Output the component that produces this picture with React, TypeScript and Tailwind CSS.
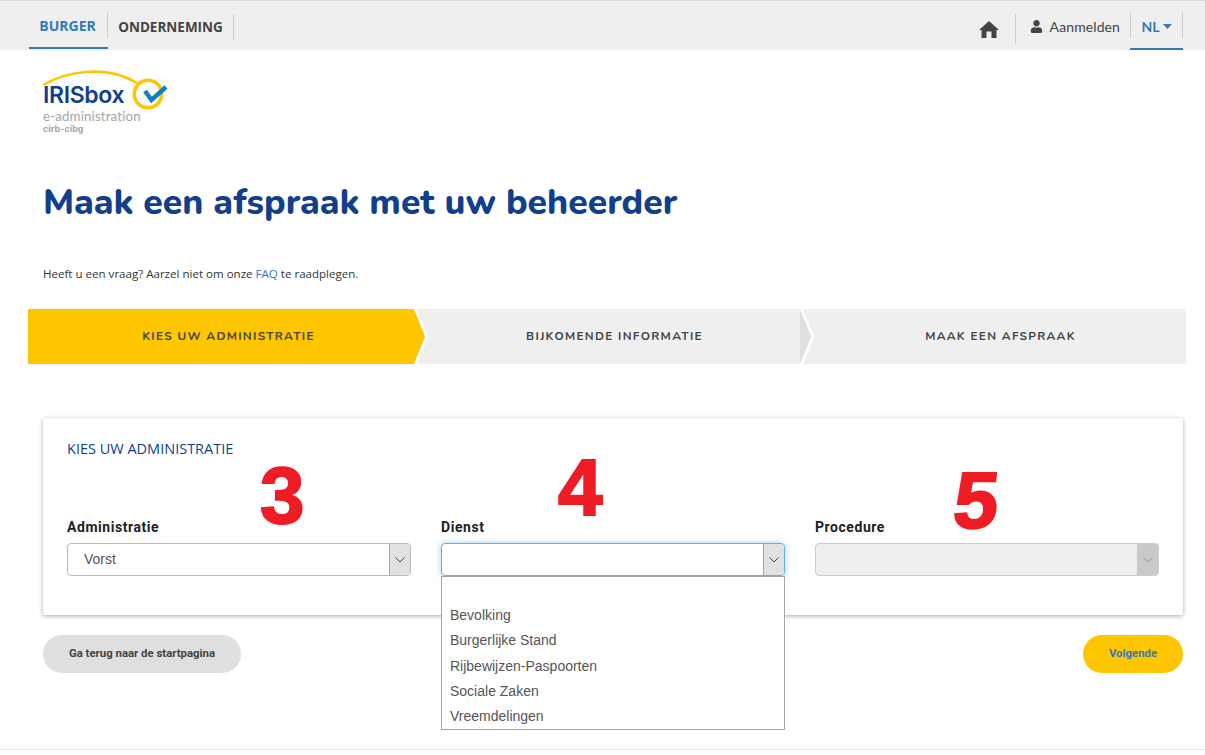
import React from "react";
import { FaUser } from "react-icons/fa";

const nun = "font-['Nunito','Noto_Sans','Open_Sans',sans-serif]";

function Logo() {
  return (
    <div className="relative w-[130px] h-[68px]">
      <svg className="absolute left-0 top-0" width="130" height="50" viewBox="0 0 130 50" fill="none">
        <path d="M0.5 16 C 20 4, 62 -6, 94 14" stroke="#fec600" strokeWidth="2.6" />
        <circle cx="105" cy="25" r="13.7" stroke="#fec600" strokeWidth="3.6" fill="#fff" />
        <path d="M102 22 L108.5 31 L123 18" stroke="#0f7fc0" strokeWidth="4.5" fill="none" />
      </svg>
      <div className="absolute left-0 top-[12px] text-[23px] leading-[28px] font-semibold tracking-[-0.35px] text-[#123f8c] font-['Inter',sans-serif]">IRISbox</div>
      <div className="absolute left-0 top-[39px] text-[13.4px] leading-[16px] tracking-[0.1px] text-[#a6a6a6] font-['Lato',sans-serif]">e-administration</div>
      <div className="absolute left-0 top-[54px] text-[9px] leading-[12px] font-bold text-[#a8a8a8] font-['Inter',sans-serif]">cirb-cibg</div>
    </div>
  );
}

function Chevron({ fill }: { fill: string }) {
  return (
    <svg className="absolute left-full top-0 z-10" width="15" height="55" viewBox="0 0 15 55">
      <polygon points="0,0 11,27.5 0,55" fill={fill} />
      <polyline points="1,-1 13,27.5 1,56" fill="none" stroke="#fff" strokeWidth="2.5" />
    </svg>
  );
}

function Step({ label, active, tip }: { label: string; active?: boolean; tip: string }) {
  return (
    <div className={`relative flex-1 flex items-center justify-center pl-[15px] ${active ? "bg-[#fec600]" : "bg-[#efefef]"}`}>
      <span className={`${nun} text-[11.8px] font-bold tracking-[1.3px] text-[#444]`}>{label}</span>
      {tip && <Chevron fill={tip} />}
    </div>
  );
}

function Field({ label, value, state, children }: { label: string; value?: string; state?: "focus" | "disabled"; children?: React.ReactNode }) {
  const box =
    state === "focus"
      ? "border-[#66afe9] shadow-[0_0_6px_rgba(102,175,233,0.6)] bg-white"
      : state === "disabled"
        ? "border-[#ccc] bg-[#eee]"
        : "border-[#bbb] bg-white";
  const btn = state === "disabled" ? "bg-[#c9c9c9] border-[#c9c9c9]" : "bg-[#e1e1e1] border-[#a6a6a6]";
  return (
    <div className="relative flex flex-col">
      <label className="font-['Roboto',sans-serif] text-[14px] leading-[16px] font-bold tracking-[0.55px] text-[#222] mb-[8px]">{label}</label>
      <div className={`h-[33px] rounded-[4px] border flex items-stretch overflow-hidden ${box}`}>
        <div className="flex-1 pl-[16px] flex items-center font-['Liberation_Sans',sans-serif] text-[14px] text-[#555]">{value}</div>
        <div className={`w-[21px] border-l flex items-center justify-center ${btn}`}>
          <svg width="10" height="6" viewBox="0 0 10 6" fill="none">
            <path d="M0.5 0.5 L5 5 L9.5 0.5" stroke={state === "disabled" ? "#999" : "#444"} strokeWidth="1" />
          </svg>
        </div>
      </div>
      {children}
    </div>
  );
}

function Num({ children, className }: { children: string; className: string }) {
  return (
    <div className={`absolute font-['Liberation_Sans',sans-serif] font-bold text-[80px] leading-[82px] text-[#ee1c25] [-webkit-text-stroke:2px_#ee1c25] ${className}`}>{children}</div>
  );
}

export default function App() {
  return (
    <div className="w-[1205px] h-[755px] overflow-hidden bg-white relative">
      <header className="h-[50px] bg-[#efefef] border-t border-[#dcdcdc] flex justify-between font-['Lato',sans-serif] pl-[29px] pr-[22px]">
        <div className="flex">
          <div className="w-[79px] flex items-center border-b-[2px] border-[#337ab7] mb-[1px]">
            <div className="h-[26px] mt-[2px] w-full border-r border-[#ccc] flex items-center justify-center pr-[1px] pt-[1px] text-[14px] font-bold text-[#337ab7] font-['Open_Sans',sans-serif]">BURGER</div>
          </div>
          <div className="w-[126px] flex items-center mb-[1px]">
            <div className="h-[26px] mt-[4px] w-full border-r border-[#ccc] flex items-center justify-center text-[13.5px] font-bold text-[#444] font-['Open_Sans',sans-serif]">ONDERNEMING</div>
          </div>
        </div>
        <div className="flex items-center">
          <svg className="mr-[16px] mt-[7px]" width="20" height="17" viewBox="0 0 20 17">
            <path d="M10 0 L20 9 L17.5 9 L17.5 17 L12.5 17 L12.5 10.5 L7.5 10.5 L7.5 17 L2.5 17 L2.5 9 L0 9 Z" fill="#444" />
          </svg>
          <div className="h-[30px] mt-[6px] border-l border-[#ccc] mr-[14px]" />
          <FaUser className="text-[#444] mr-[7px] mt-[1px]" size={13} />
          <span className="text-[14px] tracking-[0.1px] text-[#444] mr-[10px] mt-[2px]">Aanmelden</span>
          <div className="h-full flex items-center w-[53px] border-b-[2px] border-[#337ab7] mb-[1px]">
            <div className="h-[26px] mt-[2px] w-full border-x border-[#ccc] flex items-center justify-center gap-[3px] pt-[2px] text-[14px] font-bold text-[#337ab7]">
              NL
              <svg width="9" height="5" viewBox="0 0 9 5"><polygon points="0,0 9,0 4.5,5" fill="#337ab7" /></svg>
            </div>
          </div>
        </div>
      </header>

      <div className="pl-[43px] pt-[19px]">
        <Logo />
      </div>

      <h1 className={`${nun} pl-[43px] mt-[45px] text-[35.5px] leading-[42px] font-extrabold text-[#123f8c]`}>Maak een afspraak met uw beheerder</h1>

      <p className="pl-[43px] mt-[42px] text-[11.55px] leading-[16px] text-[#333] font-['Open_Sans',sans-serif]">
        Heeft u een vraag? Aarzel niet om onze <span className="text-[#337ab7]">FAQ</span> te raadplegen.
      </p>

      <div className="ml-[28px] mr-[19px] mt-[27px] h-[55px] flex">
        <Step label="KIES UW ADMINISTRATIE" active tip="#fec600" />
        <Step label="BIJKOMENDE INFORMATIE" tip="#e0e0e0" />
        <Step label="MAAK EEN AFSPRAAK" tip="" />
      </div>

      <section className="relative ml-[43px] mt-[54px] mr-[22px] h-[197px] rounded-[2px] bg-white px-[24px] pt-[22px] shadow-[0_1px_4px_rgba(0,0,0,0.35)]">
        <h2 className="font-['Open_Sans',sans-serif] text-[14.5px] leading-[18px] text-[#123f8c]">KIES UW ADMINISTRATIE</h2>
        <div className="grid grid-cols-3 gap-[30px] mt-[61px]">
          <Field label="Administratie" value="Vorst" />
          <Field label="Dienst" state="focus">
            <div className="absolute left-0 right-0 top-[57px] z-20 h-[154px] border border-[#a6a6a6] bg-white pl-[8px] pt-[26px] font-['Liberation_Sans',sans-serif] text-[14px] text-[#555]">
              {["Bevolking", "Burgerlijke Stand", "Rijbewijzen-Paspoorten", "Sociale Zaken", "Vreemdelingen"].map((t) => (
                <div key={t} className="h-[25.3px] leading-[25px]">{t}</div>
              ))}
            </div>
          </Field>
          <Field label="Procedure" state="disabled" />
        </div>
        <Num className="left-[217px] top-[37px]">3</Num>
        <Num className="left-[515px] top-[29px]">4</Num>
        <Num className="left-[911px] top-[42px] -skew-x-6">5</Num>
      </section>

      <div className="ml-[43px] mr-[22px] mt-[20px] flex justify-between font-['Roboto',sans-serif] text-[11.4px] font-bold">
        <button className="h-[38px] w-[198px] rounded-full bg-[#dfdfdf] text-[#444]">Ga terug naar de startpagina</button>
        <button className="h-[38px] w-[100px] rounded-full bg-[#fec600] text-[#337ab7]">Volgende</button>
      </div>

      <div className="absolute left-0 right-0 top-[749px] h-[1px] bg-[#e8e8e8]" />
    </div>
  );
}
